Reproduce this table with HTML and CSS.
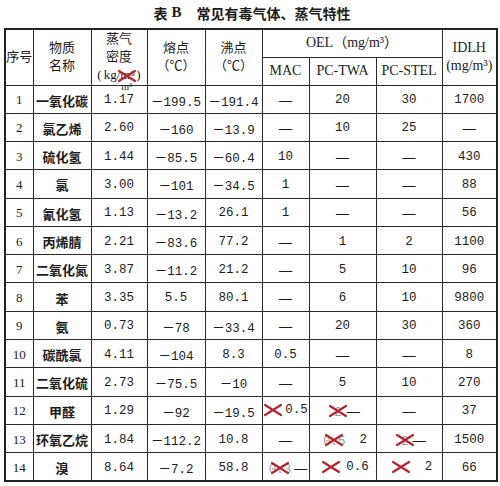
FILE: index.html
```html
<!DOCTYPE html>
<html lang="zh-CN">
<head>
<meta charset="utf-8">
<title>表B 常见有毒气体、蒸气特性</title>
<link rel="stylesheet" href="styles.css">
</head>
<body>
<div class="title"><span class="t-cn">表</span><span class="t-b">B</span><span class="t-cn t-main">常见有毒气体、蒸气特性</span></div>
<table class="gas">
  <colgroup>
    <col class="w-idx"><col class="w-name"><col class="w-dens"><col class="w-melt"><col class="w-boil"><col class="w-mac"><col class="w-twa"><col class="w-stel"><col class="w-idlh">
  </colgroup>
  <thead>
    <tr class="h1">
      <th rowspan="2" class="hd">序号</th>
      <th rowspan="2" class="hd"><div class="ln">物质</div><div class="ln">名称</div></th>
      <th rowspan="2" class="hd"><div class="ln">蒸气</div><div class="ln">密度</div><div class="ln kg"><span class="par">(</span>kg/<span class="struck">m³<svg class="x xh" viewBox="0 0 18 12"><path d="M1 1 L17 11 M17 1 L1 11"/></svg><span class="note">m³</span></span><span class="par">)</span></div></th>
      <th rowspan="2" class="hd"><div class="ln">熔点</div><div class="ln">（℃）</div></th>
      <th rowspan="2" class="hd"><div class="ln">沸点</div><div class="ln">（℃）</div></th>
      <th colspan="3" class="hl">OEL（mg/m³）</th>
      <th rowspan="2" class="hl"><div class="ln">IDLH</div><div class="ln">(mg/m³)</div></th>
    </tr>
    <tr class="h2">
      <th class="hl">MAC</th>
      <th class="hl">PC-TWA</th>
      <th class="hl">PC-STEL</th>
    </tr>
  </thead>
  <tbody>
    <tr><td class="idx">1</td><td class="nm">一氧化碳</td><td class="num">1.17</td><td class="num">－199.5</td><td class="num">－191.4</td><td class="dash">—</td><td class="num">20</td><td class="num">30</td><td class="num">1700</td></tr>
    <tr><td class="idx">2</td><td class="nm">氯乙烯</td><td class="num">2.60</td><td class="num">－160</td><td class="num">－13.9</td><td class="dash">—</td><td class="num">10</td><td class="num">25</td><td class="dash">—</td></tr>
    <tr><td class="idx">3</td><td class="nm">硫化氢</td><td class="num">1.44</td><td class="num">－85.5</td><td class="num">－60.4</td><td class="num">10</td><td class="dash">—</td><td class="dash">—</td><td class="num">430</td></tr>
    <tr><td class="idx">4</td><td class="nm">氯</td><td class="num">3.00</td><td class="num">－101</td><td class="num">－34.5</td><td class="num">1</td><td class="dash">—</td><td class="dash">—</td><td class="num">88</td></tr>
    <tr><td class="idx">5</td><td class="nm">氰化氢</td><td class="num">1.13</td><td class="num">－13.2</td><td class="num">26.1</td><td class="num">1</td><td class="dash">—</td><td class="dash">—</td><td class="num">56</td></tr>
    <tr><td class="idx">6</td><td class="nm">丙烯腈</td><td class="num">2.21</td><td class="num">－83.6</td><td class="num">77.2</td><td class="dash">—</td><td class="num">1</td><td class="num">2</td><td class="num">1100</td></tr>
    <tr><td class="idx">7</td><td class="nm">二氧化氮</td><td class="num">3.87</td><td class="num">－11.2</td><td class="num">21.2</td><td class="dash">—</td><td class="num">5</td><td class="num">10</td><td class="num">96</td></tr>
    <tr><td class="idx">8</td><td class="nm">苯</td><td class="num">3.35</td><td class="num">5.5</td><td class="num">80.1</td><td class="dash">—</td><td class="num">6</td><td class="num">10</td><td class="num">9800</td></tr>
    <tr><td class="idx">9</td><td class="nm">氨</td><td class="num">0.73</td><td class="num">－78</td><td class="num">－33.4</td><td class="dash">—</td><td class="num">20</td><td class="num">30</td><td class="num">360</td></tr>
    <tr><td class="idx">10</td><td class="nm">碳酰氯</td><td class="num">4.11</td><td class="num">－104</td><td class="num">8.3</td><td class="num">0.5</td><td class="dash">—</td><td class="dash">—</td><td class="num">8</td></tr>
    <tr><td class="idx">11</td><td class="nm">二氧化硫</td><td class="num">2.73</td><td class="num">－75.5</td><td class="num">－10</td><td class="dash">—</td><td class="num">5</td><td class="num">10</td><td class="num">270</td></tr>
    <tr><td class="idx">12</td><td class="nm">甲醛</td><td class="num">1.29</td><td class="num">－92</td><td class="num">－19.5</td>
      <td class="fix"><span class="edit e-r12mac"><span class="struck s-w"><svg class="x" viewBox="0 0 18 12"><path d="M1 1 L17 11 M17 1 L1 11"/></svg></span><span class="num-t">0.5</span></span></td>
      <td class="fix"><span class="edit e-r12twa"><span class="struck"><span class="old">2</span><svg class="x" viewBox="0 0 18 12"><path d="M1 1 L17 11 M17 1 L1 11"/></svg></span><span class="dash-t">—</span></span></td>
      <td class="dash">—</td><td class="num">37</td></tr>
    <tr><td class="idx">13</td><td class="nm">环氧乙烷</td><td class="num">1.84</td><td class="num">－112.2</td><td class="num">10.8</td>
      <td class="dash">—</td>
      <td class="fix"><span class="edit e-r13twa"><span class="struck"><span class="old">0.5</span><svg class="x" viewBox="0 0 18 12"><path d="M1 1 L17 11 M17 1 L1 11"/></svg></span><span class="num-t">2</span></span></td>
      <td class="fix"><span class="edit e-r13stel"><span class="struck"><span class="old">2</span><svg class="x" viewBox="0 0 18 12"><path d="M1 1 L17 11 M17 1 L1 11"/></svg></span><span class="dash-t">—</span></span></td>
      <td class="num">1500</td></tr>
    <tr><td class="idx">14</td><td class="nm">溴</td><td class="num">8.64</td><td class="num">－7.2</td><td class="num">58.8</td>
      <td class="fix"><span class="edit e-r14mac"><span class="struck"><span class="old">0.3</span><svg class="x" viewBox="0 0 18 12"><path d="M1 1 L17 11 M17 1 L1 11"/></svg></span><span class="dash-t">—</span></span></td>
      <td class="fix"><span class="edit e-r14twa"><span class="struck s-w"><svg class="x" viewBox="0 0 18 12"><path d="M1 1 L17 11 M17 1 L1 11"/></svg></span><span class="num-t">0.6</span></span></td>
      <td class="fix"><span class="edit e-r14stel"><span class="struck s-w"><svg class="x" viewBox="0 0 18 12"><path d="M1 1 L17 11 M17 1 L1 11"/></svg></span><span class="num-t">2</span></span></td>
      <td class="num">66</td></tr>
  </tbody>
</table>
</body>
</html>
```

FILE: styles.css
```css
html, body {
  margin: 0;
  padding: 0;
  background: #ffffff;
}
body {
  width: 500px;
  height: 486px;
  overflow: hidden;
  color: #1c1c1c;
}

.title {
  height: 25px;
  margin-bottom: 3px;
  display: flex;
  align-items: center;
  justify-content: center;
  padding-left: 4px;
  font-weight: 700;
}
.t-cn {
  font-family: "Noto Sans CJK SC", sans-serif;
  font-size: 14px;
  font-weight: 700;
}
.t-b {
  font-family: "Liberation Serif", serif;
  font-size: 15px;
  font-weight: 700;
  margin-left: 4px;
  margin-right: 15px;
}

.gas {
  margin-left: 4px;
  width: 494px;
  table-layout: fixed;
  border-collapse: collapse;
  border: 2px solid #222222;
}
.w-idx { width: 28px; }
.w-name { width: 58px; }
.w-dens { width: 56px; }
.w-melt { width: 58px; }
.w-boil { width: 57px; }
.w-mac { width: 47px; }
.w-twa { width: 67px; }
.w-stel { width: 66px; }
.w-idlh { width: 55px; }

.gas th, .gas td {
  border: 1px solid #2a2a2a;
  padding: 0;
  text-align: center;
  vertical-align: middle;
  white-space: nowrap;
}
.gas thead tr { height: 28px; }
.gas tbody tr { height: 28.29px; }

.hd {
  font-family: "Liberation Serif", "Noto Sans CJK SC", serif;
  font-size: 13px;
  font-weight: 400;
  line-height: 18px;
}
.hl {
  font-family: "Liberation Serif", "Noto Sans CJK SC", serif;
  font-size: 14px;
  font-weight: 400;
  line-height: 18px;
}
.ln { line-height: 18px; }
.kg { font-size: 13px; }
.par { margin: 0 2px; }

.struck {
  position: relative;
  display: inline-block;
}
.x {
  position: absolute;
  left: 50%;
  top: 50%;
  width: 18px;
  height: 12px;
  margin-left: -9px;
  margin-top: -6px;
  overflow: visible;
}
.x path {
  fill: none;
  stroke: #b3262f;
  stroke-width: 2.2;
  stroke-linecap: round;
}
.xh { margin-top: -5px; }
.note {
  position: absolute;
  left: 1px;
  top: 16px;
  font-size: 10px;
  line-height: 10px;
  color: #222;
}

.gas tbody td { padding-top: 2px; }
.idx {
  font-family: "Liberation Serif", serif;
  font-size: 13px;
}
.nm {
  font-family: "Noto Sans CJK SC", sans-serif;
  font-size: 13px;
  font-weight: 700;
  letter-spacing: 0;
}
.num, .num-t, .old {
  font-family: "Liberation Mono", "Noto Sans CJK SC", monospace;
  font-size: 12.5px;
}
.dash, .dash-t {
  font-family: "Liberation Serif", serif;
  font-size: 13px;
  font-weight: 700;
}

.fix { text-align: left; }
.edit {
  display: inline-flex;
  align-items: center;
}
.old { color: #9a9a9a; }
.s-w { width: 18px; height: 12px; }

.e-r12mac { padding-left: 1px; gap: 3px; }
.e-r12twa { padding-left: 9px; gap: 5px; }
.e-r13twa { padding-left: 5px; gap: 14px; }
.e-r13stel { padding-left: 9px; gap: 4px; }
.e-r14mac { padding-left: 5px; gap: 3px; }
.e-r14twa { padding-left: 6px; gap: 6px; }
.e-r14stel { padding-left: 6px; gap: 15px; }
```
